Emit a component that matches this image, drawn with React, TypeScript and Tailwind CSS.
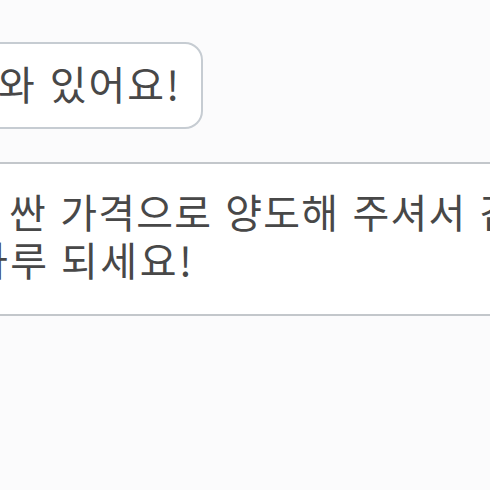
import React from "react";

export default function App() {
  const font = { fontFamily: '"Noto Sans CJK KR", "Noto Sans", sans-serif' };
  return (
    <div className="w-[490px] h-[490px] overflow-hidden bg-[#fbfbfc] text-[#484848]" style={font}>
      <div className="pt-[42px]">
        <div className="ml-[-40px] w-[243px] rounded-[18px] border-2 border-[#c6ccd2] bg-white pl-[36px] pt-[14px] pb-[19px]">
          <div className="whitespace-nowrap text-[40px] leading-[50px] tracking-[2px] [word-spacing:2px]">와 있어요!</div>
        </div>
      </div>
      <div className="mt-[33px] ml-[-40px] w-[570px] rounded-[18px] border-y-2 border-[#c3c7cb] bg-white pt-[22px] pb-[30px]">
        <div className="whitespace-nowrap text-[40px] leading-[50px] pl-[49px] tracking-[1.2px] [word-spacing:3px]">싼 가격으로 양도해 주셔서 감사해요</div>
        <div className="whitespace-nowrap text-[40px] leading-[50px] pl-[11px] mt-[-2px] tracking-[2.5px] [word-spacing:0px]">하루 되세요!</div>
      </div>
    </div>
  );
}
